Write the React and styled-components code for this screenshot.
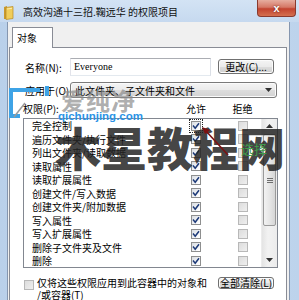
import React from 'react';
import styled, { createGlobalStyle } from 'styled-components';

const GlobalStyle = createGlobalStyle`
  html, body {
    margin: 0;
    padding: 0;
    background: #c4d8ee;
  }
  body {
    font-family: "Noto Sans CJK SC", "Noto Sans", sans-serif;
    font-size: 10px;
    color: #000;
    overflow: hidden;
  }
`;

const Window = styled.div`
  position: relative;
  width: 299px;
  height: 300px;
  overflow: hidden;
  display: flex;
  flex-direction: column;
  background: linear-gradient(90deg, #b9d0ea 0%, #cadcf0 45%, #bdd3ec 100%);
`;

const TitleBar = styled.div`
  height: 22px;
  flex: none;
  display: flex;
  align-items: flex-start;
  padding-left: 3px;
  background: linear-gradient(180deg, #d3e3f4 0%, #c6d9ef 100%);
`;

const TitleText = styled.span`
  margin-left: 9px;
  line-height: 23px;
  font-size: 10px;
  white-space: nowrap;
  color: #111;
`;

const CloseButton = styled.div`
  margin: 0 3px 0 auto;
  width: 39px;
  height: 17px;
  box-sizing: border-box;
  border: 1px solid #8a3a2e;
  border-top: none;
  border-radius: 0 0 4px 4px;
  background: linear-gradient(180deg, #e6ad9f 0%, #d57866 45%, #c2432f 55%, #d4704f 100%);
  display: flex;
  align-items: center;
  justify-content: center;
  color: #fff;
  font-family: "Liberation Sans", Arial, sans-serif;
  font-weight: bold;
  font-size: 11px;
  text-shadow: 0 0 2px #5a1a10;
`;

const Frame = styled.div`
  flex: 1;
  min-height: 0;
  display: flex;
  padding: 0 10px 0 7px;
`;

const Client = styled.div`
  flex: 1;
  display: flex;
  flex-direction: column;
  background: #f0f0f0;
  border-left: 1px solid #8596af;
  border-right: 1px solid #8596af;
  padding: 5px 2px 0 1px;
`;

const TabStrip = styled.div`
  display: flex;
  padding-left: 3px;
`;

const Tab = styled.div`
  position: relative;
  z-index: 1;
  width: 41px;
  height: 21px;
  box-sizing: border-box;
  margin-bottom: -1px;
  border: 1px solid #898c95;
  border-bottom: none;
  background: #fff;
  padding-left: 4px;
  line-height: 19px;
`;

const Panel = styled.div`
  flex: 1;
  display: flex;
  flex-direction: column;
  border: 1px solid #898c95;
  background: #fff;
  padding: 10px 8px 0 13px;
`;

const FieldRow = styled.div`
  display: flex;
  align-items: center;
  height: ${(p) => p.$h}px;
  margin-top: ${(p) => p.$gap || 0}px;
`;

const Label = styled.span`
  width: 47px;
  flex: none;
  box-sizing: border-box;
  padding-left: 2px;
  white-space: nowrap;
`;

const TextBox = styled.div`
  width: 141px;
  height: 18px;
  box-sizing: border-box;
  border: 1px solid;
  border-color: #abadb3 #dbdfe6 #e3e9ef #e2e3ea;
  padding-left: 3px;
  font-family: "Liberation Serif", "Times New Roman", serif;
  font-size: 10px;
  line-height: 16px;
`;

const Button = styled.div`
  width: ${(p) => p.$w}px;
  height: ${(p) => p.$h}px;
  box-sizing: border-box;
  margin-left: ${(p) => (p.$right ? 'auto' : '7px')};
  margin-right: ${(p) => (p.$right ? '4px' : '0')};
  align-self: flex-start;
  margin-top: ${(p) => p.$top || 0}px;
  border: 1px solid #707070;
  border-radius: 3px;
  background: linear-gradient(180deg, #f4f4f4 0%, #ebebeb 50%, #dddddd 51%, #cfcfcf 100%);
  box-shadow: inset 0 0 0 1px #fbfbfb;
  display: flex;
  align-items: center;
  justify-content: center;
  white-space: nowrap;
  line-height: 10px;
`;

const Combo = styled.div`
  width: 207px;
  height: 16px;
  box-sizing: border-box;
  border: 1px solid #7a7a7a;
  border-radius: 3px;
  background: linear-gradient(180deg, #f4f4f4 0%, #ebebeb 50%, #dddddd 51%, #d3d3d3 100%);
  box-shadow: inset 0 0 0 1px #fbfbfb;
  display: flex;
  align-items: center;
  justify-content: space-between;
  padding: 0 4px 0 4px;
  white-space: nowrap;
`;

const PermHeader = styled.div`
  display: grid;
  grid-template-columns: 149px 48px 45px;
  margin-top: 5px;
  height: 12px;
  line-height: 12px;
`;

const HeaderCell = styled.span`
  text-align: ${(p) => (p.$center ? 'center' : 'left')};
  white-space: nowrap;
`;

const ListBox = styled.div`
  margin-top: 3px;
  height: 150px;
  box-sizing: border-box;
  border: 1px solid #828790;
  display: flex;
`;

const Rows = styled.div`
  flex: 1;
`;

const Row = styled.div`
  display: grid;
  grid-template-columns: 148px 48px 41px;
  height: 13.5px;
  align-items: center;
`;

const RowText = styled.span`
  padding-left: 8px;
  white-space: nowrap;
  line-height: 13px;
`;

const Cell = styled.span`
  display: flex;
  justify-content: center;
  padding-left: ${(p) => p.$pad || 0}px;
`;

const Box = styled.span`
  width: 10px;
  height: 10px;
  box-sizing: border-box;
  display: flex;
  align-items: center;
  justify-content: center;
  border: 1px solid ${(p) => (p.$disabled ? '#b8b8b8' : '#8e8f8f')};
  background: ${(p) =>
    p.$disabled
      ? 'linear-gradient(135deg, #dcdcdc 0%, #efefef 100%)'
      : 'linear-gradient(135deg, #d9dde2 0%, #ffffff 90%)'};
  outline: ${(p) => (p.$focus ? '1px dotted #222' : 'none')};
  outline-offset: 1px;
  flex: none;
`;

const ScrollBar = styled.div`
  width: 15px;
  display: flex;
  flex-direction: column;
  background: linear-gradient(90deg, #e4e4e4 0%, #f2f2f2 40%, #ececec 100%);
  border-left: 1px solid #ececec;
`;

const ScrollArrow = styled.div`
  height: 14px;
  display: flex;
  align-items: center;
  justify-content: center;
`;

const Track = styled.div`
  flex: 1;
  padding: 1px 1px 0 1px;
`;

const Thumb = styled.div`
  height: 92px;
  box-sizing: border-box;
  border: 1px solid #9a9a9a;
  border-radius: 2px;
  background: linear-gradient(90deg, #f2f2f2 0%, #e6e6e6 50%, #d6d6d6 100%);
  display: flex;
  align-items: center;
  justify-content: center;
`;

const Grip = styled.span`
  width: 6px;
  height: 5px;
  background: repeating-linear-gradient(180deg, #6e6e6e 0, #6e6e6e 1px, transparent 1px, transparent 2px);
`;

const BottomRow = styled.div`
  display: flex;
  align-items: flex-start;
  margin-top: 9px;
  padding-left: 1px;
`;

const BottomBox = styled(Box)`
  margin-top: 3px;
`;

const BottomText = styled.span`
  margin-left: 3px;
  line-height: 12px;
  white-space: nowrap;
`;

/* watermark layer over the dialog */
const Overlay = styled.div`
  position: absolute;
  inset: 0;
  pointer-events: none;
`;

const LogoMark = styled.svg`
  position: absolute;
  left: 6px;
  top: 86px;
`;

const BrandText = styled.span`
  position: absolute;
  left: 61px;
  top: 85px;
  font-size: 24px;
  line-height: 30px;
  font-weight: 700;
  letter-spacing: 1px;
  color: rgba(140, 140, 140, 0.7);
`;

const BrandUrl = styled.span`
  position: absolute;
  left: 58px;
  top: 110px;
  font-family: "Liberation Sans", Arial, sans-serif;
  font-weight: bold;
  font-size: 11.5px;
  line-height: 13px;
  color: #2b93e6;
`;

const BigMark = styled.span`
  position: absolute;
  left: 55px;
  top: 123px;
  font-size: 46px;
  line-height: 46px;
  font-weight: 900;
  white-space: nowrap;
  color: rgba(36, 36, 36, 0.86);
`;

const Note = styled.span`
  position: absolute;
  left: 241px;
  top: 141px;
  font-size: 13px;
  line-height: 16px;
  color: #3f9b4a;
`;

const Arrow = styled.svg`
  position: absolute;
  left: 196px;
  top: 122px;
`;

const Check = () => (
  <svg width="8" height="8" viewBox="0 0 8 8">
    <path d="M1 3.6 L3.2 6.2 L7 1.2" fill="none" stroke="#1d3a78" strokeWidth="1.5" />
  </svg>
);

const CheckBox = ({ checked, disabled, focus }) => (
  <Box $disabled={disabled} $focus={focus}>
    {checked && <Check />}
  </Box>
);

const FolderIcon = () => (
  <svg width="11" height="15" viewBox="0 0 11 15" style={{ marginTop: 5 }}>
    <path d="M1 2 L4 1 L4 14 L1 14 Z" fill="#c99a2e" />
    <path d="M3 2.5 L10 1.5 L10 13.5 L3 14.5 Z" fill="#f0cd5b" stroke="#b88a22" strokeWidth="0.7" />
    <path d="M4 4 L9 3.3" stroke="#fff3c4" strokeWidth="0.8" />
  </svg>
);

const Tri = ({ down }) => (
  <svg width="7" height="4" viewBox="0 0 7 4">
    <path d={down ? 'M0 0 H7 L3.5 4 Z' : 'M0 4 H7 L3.5 0 Z'} fill="#333" />
  </svg>
);

const permissions = [
  '完全控制',
  '遍历文件夹/执行文件',
  '列出文件夹/读取数据',
  '读取属性',
  '读取扩展属性',
  '创建文件/写入数据',
  '创建文件夹/附加数据',
  '写入属性',
  '写入扩展属性',
  '删除子文件夹及文件',
  '删除',
];

export default function App() {
  return (
    <>
      <GlobalStyle />
      <Window>
        <TitleBar>
          <FolderIcon />
          <TitleText>高效沟通十三招.鞠远华 的权限项目</TitleText>
          <CloseButton>x</CloseButton>
        </TitleBar>
        <Frame>
          <Client>
            <TabStrip>
              <Tab>对象</Tab>
            </TabStrip>
            <Panel>
              <FieldRow $h={18}>
                <Label>名称(N):</Label>
                <TextBox>Everyone</TextBox>
                <Button $w={56} $h={15} $top={1}>更改(C)...</Button>
              </FieldRow>
              <FieldRow $h={16} $gap={6}>
                <Label>应用于(O):</Label>
                <Combo>
                  <span>此文件夹、子文件夹和文件</span>
                  <Tri down />
                </Combo>
              </FieldRow>
              <PermHeader>
                <HeaderCell>权限(P):</HeaderCell>
                <HeaderCell $center>允许</HeaderCell>
                <HeaderCell $center>拒绝</HeaderCell>
              </PermHeader>
              <ListBox>
                <Rows>
                  {permissions.map((name, i) => (
                    <Row key={name}>
                      <RowText>{name}</RowText>
                      <Cell>
                        <CheckBox checked focus={i === 0} />
                      </Cell>
                      <Cell $pad={4}>
                        <CheckBox disabled />
                      </Cell>
                    </Row>
                  ))}
                </Rows>
                <ScrollBar>
                  <ScrollArrow>
                    <Tri />
                  </ScrollArrow>
                  <Track>
                    <Thumb>
                      <Grip />
                    </Thumb>
                  </Track>
                  <ScrollArrow>
                    <Tri down />
                  </ScrollArrow>
                </ScrollBar>
              </ListBox>
              <BottomRow>
                <BottomBox $disabled />
                <BottomText>
                  仅将这些权限应用到此容器中的对象和
                  <br />
                  /或容器(T)
                </BottomText>
                <Button $w={56} $h={12} $right>全部清除(L)</Button>
              </BottomRow>
            </Panel>
          </Client>
        </Frame>
        <Overlay>
          <LogoMark width="46" height="36" viewBox="0 0 46 36">
            <path d="M34 4 H5 V30 H14" fill="none" stroke="#3ea3e6" strokeWidth="4" />
            <path d="M41 0 V10" fill="none" stroke="#3ea3e6" strokeWidth="4" />
            <path d="M8 31 L19 17" fill="none" stroke="#9a9a9a" strokeWidth="1.5" />
          </LogoMark>
          <BrandText>爱纯净</BrandText>
          <BrandUrl>qichunjing.com</BrandUrl>
          <BigMark>木星教程网</BigMark>
          <Note>选择</Note>
          <Arrow width="36" height="36" viewBox="0 0 36 36">
            <path d="M32 33 L9 8" stroke="#7a1212" strokeWidth="1.6" fill="none" />
            <path d="M6 5 L14 8 L9 12 Z" fill="#7a1212" />
          </Arrow>
        </Overlay>
      </Window>
    </>
  );
}
